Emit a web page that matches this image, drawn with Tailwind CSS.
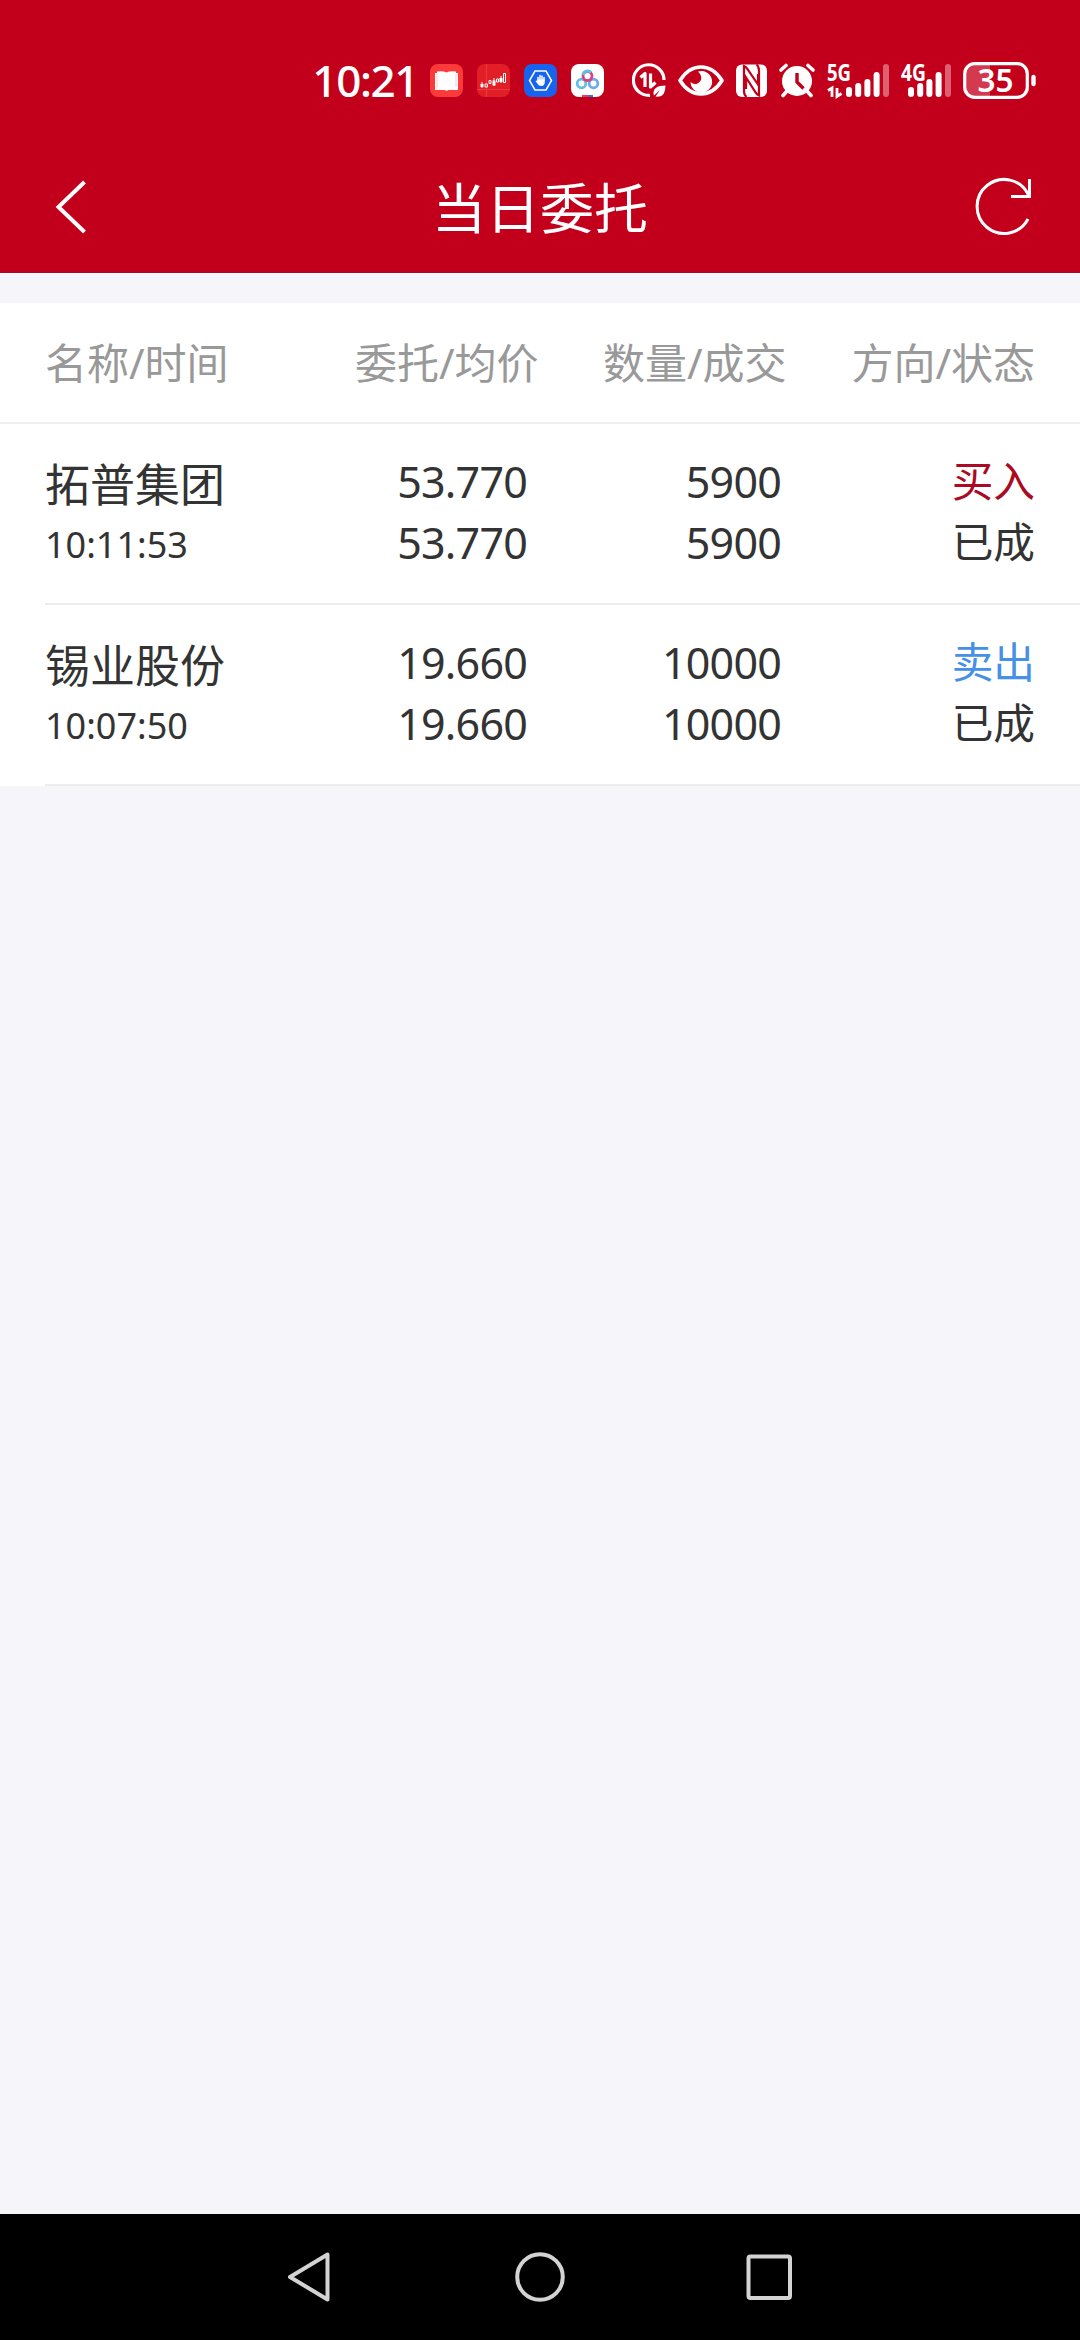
<!DOCTYPE html>
<html lang="zh-CN">
<head>
    <meta charset="UTF-8">
    <meta name="viewport" content="width=device-width, initial-scale=1.0">
    <title>当日委托</title>
    <script src="https://cdn.jsdelivr.net/npm/@tailwindcss/browser@4"></script>
</head>
<body class="bg-[#f5f5fa] font-['Noto_Sans','Noto_Sans_CJK_SC',sans-serif] text-[#333333]">

<div class="flex flex-col w-[1080px] h-[2340px] overflow-hidden">

    <header class="h-[273px] shrink-0 bg-[#c3001b] border-b border-[#95152d] text-white">
        <!-- status bar -->
        <div class="flex items-center justify-end h-[100px] pt-[60px] pr-11">
            <span class="text-[44px] leading-10 font-medium tracking-[-1.4px] mr-[12px]">10:21</span>
            <div class="flex gap-[14px] mr-7">
                <svg width="33" height="40" viewBox="0 0 33 40">
                    <rect y="4" width="33" height="33" rx="8" fill="#fd3a3a"/>
                    <path d="M5 13h2v-1.500q6-1 9.500 1q3.500-2 9.500-1V13h2v17h-9.500q-2 1.500-4 0H5z" fill="#fff"/>
                    <path d="M7 14v13M26 14v13" stroke="#fdc9c9" stroke-width="1"/>
                </svg>
                <svg width="33" height="40" viewBox="0 0 33 40">
                    <rect y="4" width="33" height="33" rx="8" fill="#e21e26"/>
                    <path d="M9.500 4v33M0 29.500h33" stroke="#ea3a3f" stroke-width="1"/>
                    <path d="M3.500 24h3v3h-3zM15.500 20.500h3v5h-3zM22.500 18h3v4h-3z" fill="#fff"/>
                    <path d="M8 24h2.500v3H8zM12 20.500h2v3h-2zM19.500 19h2v3h-2zM26.500 13.500h2v9h-2zM5 22v6M17 18v8M24 16v7" fill="none" stroke="#fff" stroke-width="1"/>
                </svg>
                <svg width="33" height="40" viewBox="0 0 33 40">
                    <rect y="4" width="33" height="33" rx="8" fill="#1763ee"/>
                    <path d="M11 11h11l5.500 9.500L22 30H11l-5.500-9.500z" fill="none" stroke="#fff" stroke-width="1.500"/>
                    <path d="M14 20v-2.500M16 20v-4.500M18 20v-4M20 20v-2.500" stroke="#fff" stroke-width="1.500" stroke-linecap="round"/>
                    <path d="M13.300 19.500H20.800v3q-.5 3.500-3.500 3.500-2.500 0-4-2.500l-1.800-2.500q1-1 1.800 0z" fill="#fff"/>
                </svg>
                <svg width="33" height="40" viewBox="0 0 33 40">
                    <rect y="4" width="33" height="33" rx="8" fill="#fff"/>
                    <circle cx="10.500" cy="23.500" r="4.300" fill="none" stroke="#62bfe3" stroke-width="2.800"/>
                    <circle cx="22.500" cy="23.500" r="4.300" fill="none" stroke="#6faaf0" stroke-width="2.800"/>
                    <circle cx="16.500" cy="16" r="4.500" fill="none" stroke="#d8437c" stroke-width="2.800"/>
                    <path d="M12 15a4.700 4.700 0 0 1 8-2.500" fill="none" stroke="#62bfe3" stroke-width="3"/>
                    <path d="M11 35h6v2h-6z" fill="#e8405a"/>
                    <path d="M17 35h5v2h-5z" fill="#3c72d8"/>
                </svg>
            </div>
            <!-- data saver -->
            <svg class="mr-3" width="34" height="40" viewBox="0 0 34 40">
                <path d="M18 35.300A15.300 15.300 0 1 1 32 20" fill="none" stroke="#fff" stroke-width="3.200"/>
                <path d="M8.500 17.500l4.500-4V27M18.500 13.500V27l5-4.500" fill="none" stroke="#fff" stroke-width="3.200" stroke-linejoin="round"/>
                <path d="M33.500 25.500q-12 0-12 7.500 0 1.500.5 2.500l6-5.500-4.500 6.500q10 2 10-11z" fill="#fff"/>
            </svg>
            <!-- eye comfort -->
            <svg class="mr-3" width="46" height="40" viewBox="0 0 46 40">
                <path d="M2 20.500Q10.500 7 23 7T44 20.500Q35.500 34 23 34T2 20.500z" fill="none" stroke="#fff" stroke-width="3.600" stroke-linejoin="round"/>
                <path d="M20 11.500A10.800 10.800 0 1 1 12.500 22q3.200 3 7 1.500 5-2.500 3.500-7.500-1-3-3-4.500z" fill="#fff"/>
            </svg>
            <!-- nfc -->
            <svg class="mr-3" width="31" height="40" viewBox="0 0 31 40">
                <rect y="4.500" width="31" height="32.500" rx="6" fill="#fff"/>
                <path d="M10.500 37q-2.500-2-2.500-6V6q1.500.5 3 2.500L22 24.500V14" fill="none" stroke="#c3001b" stroke-width="2.200"/>
                <path d="M20.500 4.500q2.500 2 2.500 6V35.500q-1.500-.5-3-2.500L10 17.500V29" fill="none" stroke="#c3001b" stroke-width="2.200"/>
            </svg>
            <!-- alarm -->
            <svg class="mr-3" width="36" height="40" viewBox="0 0 36 40">
                <circle cx="18" cy="21" r="15" fill="#fff"/>
                <path d="M2 10l5-4.500M34 10l-5-4.500M8 31l-4 4.500M28 31l4 4.500" stroke="#fff" stroke-width="3.600" stroke-linecap="round"/>
                <path d="M18 13v9l6.500 6.500" fill="none" stroke="#c3001b" stroke-width="3.400"/>
            </svg>
            <!-- 5G signal -->
            <svg class="mr-3 overflow-visible" width="62" height="40" viewBox="0 0 62 40">
                <text x="0" y="21" font-size="23" font-weight="700" textLength="24" lengthAdjust="spacingAndGlyphs" fill="#fff">5G</text>
                <path d="M1 30.500l4-2.500v9M10 28v8.500l4.500-3" fill="none" stroke="#fff" stroke-width="2.800"/>
                <path d="M22 30v4M31.200 26v8M40.400 22v12M49.600 15v19" stroke="#fff" stroke-width="6" stroke-linecap="round"/>
                <path d="M59 7v27" stroke="#dd5f70" stroke-width="6" stroke-linecap="round"/>
            </svg>
            <!-- 4G signal -->
            <svg class="mr-3 overflow-visible" width="50" height="40" viewBox="0 0 50 40">
                <path d="M10 30v4M19.200 26v8M28.400 22v12M37.600 15v19" stroke="#fff" stroke-width="6" stroke-linecap="round"/>
                <path d="M47 7v27" stroke="#dd5f70" stroke-width="6" stroke-linecap="round"/>
                <text x="0" y="21" font-size="23" font-weight="700" textLength="25" lengthAdjust="spacingAndGlyphs" fill="#fff">4G</text>
            </svg>
            <!-- battery -->
            <svg width="73" height="40" viewBox="0 0 73 40">
                <path d="M27 4H11Q2 4 2 13v14q0 9 9 9h16z" fill="#d33a4f"/>
                <rect x="1.700" y="3.700" width="62.600" height="33.600" rx="10" fill="none" stroke="#fff" stroke-width="3.200"/>
                <path d="M70.500 17v7" stroke="#fff" stroke-width="4.400" stroke-linecap="round"/>
                <text x="32.500" y="31.700" font-size="32" font-weight="600" text-anchor="middle" textLength="36" lengthAdjust="spacingAndGlyphs" fill="#fff">35</text>
            </svg>
        </div>

        <!-- title bar -->
        <div class="flex items-center justify-between h-[172px] pt-[41px] px-[45px]">
            <svg width="60" height="60" viewBox="0 0 60 60" fill="none" stroke="#fff" stroke-width="4">
                <path d="M39.500 5L13.500 30l26 25"/>
            </svg>
            <h1 class="text-[54px] leading-[60px] pt-0.5">当日委托</h1>
            <svg width="60" height="60" viewBox="0 0 60 60" fill="none" stroke="#fff" stroke-width="3">
                <path d="M53.300 17.500A27 27 0 1 0 53 42"/>
                <path d="M54.500 2v17.500H36"/>
            </svg>
        </div>
    </header>

    <main class="grow pt-[30px]">
        <div class="bg-white">
            <div class="flex h-[121px] px-[45px] leading-[120px] text-[42px] text-[#999999] border-b-2 border-[#efeff0]">
                <span class="w-[310px]">名称/时间</span>
                <span class="w-[248px]">委托/均价</span>
                <span class="w-[248px]">数量/成交</span>
                <span class="grow text-right whitespace-nowrap">方向/状态</span>
            </div>

            <div class="pl-[45px]">
                <div class="grid grid-cols-[228px_254px_254px_254px] h-[181px] border-b-2 border-[#ececec]">
                    <div class="pt-[31px] leading-[60px]">
                        <p class="text-[45px]">拓普集团</p>
                        <p class="text-[36px]">10:11:53</p>
                    </div>
                    <div class="pt-[27px] leading-[61px] text-[43px] tracking-[-0.8px] text-right">
                        <p>53.770</p>
                        <p>53.770</p>
                    </div>
                    <div class="pt-[27px] leading-[61px] text-[43px] tracking-[-0.8px] text-right">
                        <p>5900</p>
                        <p>5900</p>
                    </div>
                    <div class="pt-[26px] leading-[61px] text-[41.7px] text-right">
                        <p class="text-[#aa0a23]">买入</p>
                        <p>已成</p>
                    </div>
                </div>
                <div class="grid grid-cols-[228px_254px_254px_254px] h-[181px] border-b-2 border-[#ececec]">
                    <div class="pt-[31px] leading-[60px]">
                        <p class="text-[45px]">锡业股份</p>
                        <p class="text-[36px]">10:07:50</p>
                    </div>
                    <div class="pt-[27px] leading-[61px] text-[43px] tracking-[-0.8px] text-right">
                        <p>19.660</p>
                        <p>19.660</p>
                    </div>
                    <div class="pt-[27px] leading-[61px] text-[43px] tracking-[-0.8px] text-right">
                        <p>10000</p>
                        <p>10000</p>
                    </div>
                    <div class="pt-[26px] leading-[61px] text-[41.7px] text-right">
                        <p class="text-[#4690e6]">卖出</p>
                        <p>已成</p>
                    </div>
                </div>
            </div>
        </div>
    </main>

    <!-- system navigation -->
    <nav class="flex items-center justify-center gap-[179px] h-[126px] shrink-0 bg-black">
        <svg width="50" height="54" viewBox="0 0 50 54" fill="none" stroke="#d3d3d3" stroke-width="4" stroke-linejoin="round">
            <path d="M41.500 4.500v45L4 27z"/>
        </svg>
        <svg width="50" height="54" viewBox="0 0 50 54" fill="none" stroke="#d3d3d3" stroke-width="4">
            <circle cx="25" cy="27" r="22.800"/>
        </svg>
        <svg width="50" height="54" viewBox="0 0 50 54" fill="none" stroke="#d3d3d3" stroke-width="4">
            <rect x="4.500" y="6.500" width="41.500" height="41.500" rx="2"/>
        </svg>
    </nav>
</div>

</body>
</html>
